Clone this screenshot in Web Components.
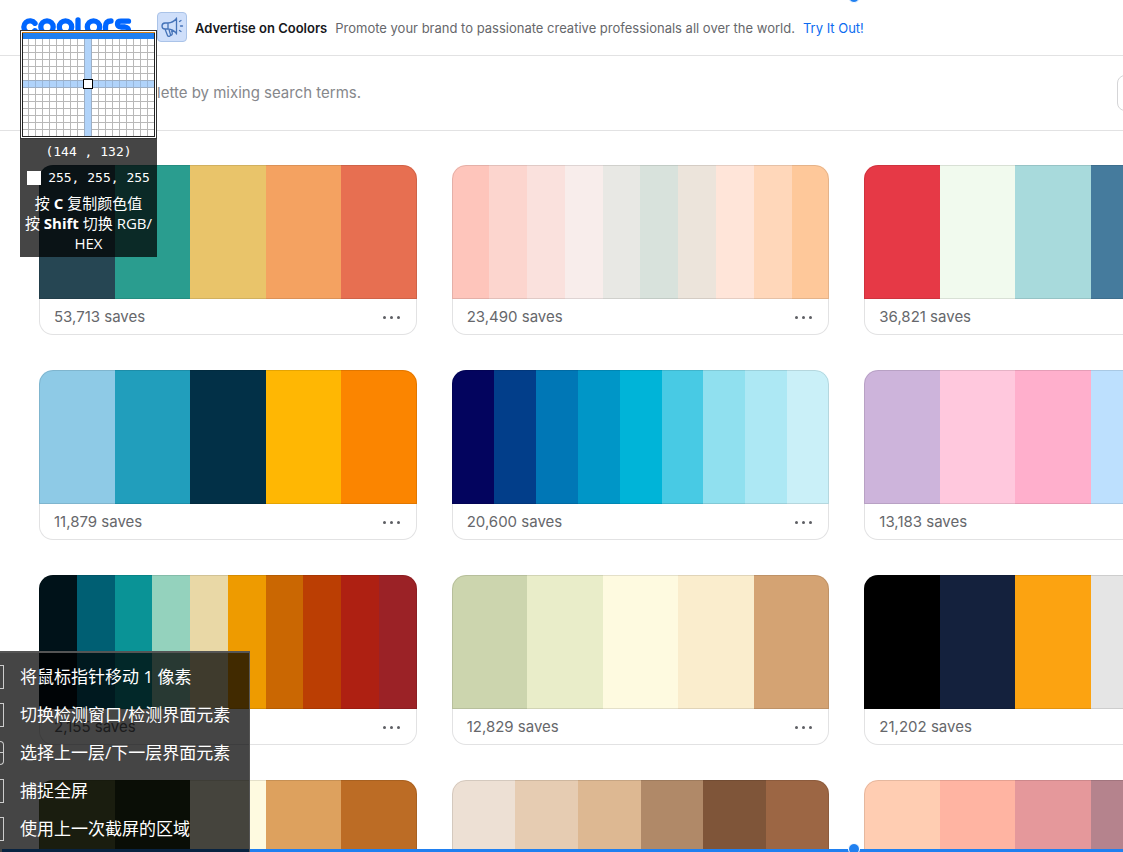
<!DOCTYPE html>
<html lang="en">
<head>
<meta charset="utf-8">
<title>Coolors</title>
<style>
html,body{margin:0;height:100%;background:#fff}
body{font-family:Inter,"Noto Sans CJK SC",sans-serif;overflow:hidden}
</style>
</head>
<body>
<palette-page></palette-page>
<script>
class BaseElement extends HTMLElement{
  constructor(){super();this.attachShadow({mode:'open'});}
  render(html){this.shadowRoot.innerHTML='<style>*{box-sizing:border-box}</style>'+html;}
}

customElements.define('brand-logo',class extends BaseElement{
  connectedCallback(){this.render(`
<style>:host{display:block}a,svg{display:block}</style>
<a href="#" aria-label="Coolors"><svg width="112" height="22" viewBox="0 0 112 22" fill="none" stroke="#0066ff" stroke-width="5.300" stroke-linecap="round">
<path d="M15 6.300A6.200 6.200 0 1 0 15 13.700"/>
<circle cx="27" cy="10" r="6.200"/><circle cx="45.500" cy="10" r="6.200"/>
<path d="M58 3v10q0 3 3 3"/><circle cx="73.500" cy="10" r="6.200"/>
<path d="M85.500 16v-6q0-6 5.500-6M108.500 4.200H101q-3.500 0-3.500 2.800 0 2.500 3.500 3h4q3.500.5 3.500 3.300t-3.500 2.800h-7"/>
</svg></a>`);}
});

customElements.define('promo-bar',class extends BaseElement{
  connectedCallback(){this.render(`
<style>
:host{display:flex;align-items:center;height:56px;padding:0 20px;border-bottom:1px solid #e2e2e3;font-size:13px;line-height:20px;color:#66676b;white-space:nowrap}
brand-logo{flex:none;width:112px}
.icon{flex:none;margin:0 8px 2px 25px;width:30px;height:30px;border:1px solid #aac3e8;border-radius:4px;background:#cfdffa}
.icon svg{display:block}
strong{font-weight:600;color:#16171b;margin-right:8px}
.try{color:#0b6bf0;text-decoration:none;margin-left:8px}
</style>
<brand-logo></brand-logo>
<span class="icon"><svg width="28" height="28" viewBox="0 0 28 28" fill="none" stroke="#4573b8" stroke-width="1.300" stroke-linecap="round" stroke-linejoin="round">
<path d="M18.500 5v16M18.500 5.500c-2.500 3-5 4.300-8.500 4.500H7c-2 .2-3 1.200-3 3s1 3 3 3h3c3.500.2 6 1.500 8.500 4.500M10 10v6M7 16l2.500 6.500c.6 1.500 3.400 1 3-.8L11 16.500M12.500 22.500c2-.2 2.300-1.500 1-5"/>
<path d="M21.500 8.500l1.500-1M22.500 13H24.500M21.500 17.500l1.500 1"/></svg></span>
<strong>Advertise on Coolors</strong><span>Promote your brand to passionate creative professionals all over the world.</span><a class="try" href="#">Try It Out!</a>`);}
});

customElements.define('search-bar',class extends BaseElement{
  connectedCallback(){this.render(`
<style>
:host{display:flex;align-items:center;justify-content:space-between;height:75px;padding-left:157px;border-bottom:1px solid #e2e2e3;overflow:hidden}
p{margin:0;font-size:15px;line-height:20px;color:#86878b;white-space:nowrap}
button{flex:none;width:36px;height:36px;margin-right:-30px;border:1px solid #d5d5d7;border-radius:8px;background:#fff}
</style>
<p>lette by mixing search terms.</p><button aria-label="Options"></button>`);}
});

customElements.define('palette-card',class extends BaseElement{
  connectedCallback(){
    const colors=this.getAttribute('colors').split(' ');
    this.render(`
<style>
:host{display:block;min-width:0}
.swatches{display:flex;height:134px;border-radius:14px 14px 0 0;overflow:hidden;position:relative}
.swatches::after{content:"";position:absolute;inset:0;border:1px solid rgba(0,0,0,.1);border-radius:14px 14px 0 0}
.swatches span{flex:1}
footer{display:flex;align-items:center;justify-content:space-between;height:36px;padding:0 14px;border:1px solid #e2e2e3;border-top:0;border-radius:0 0 14px 14px;font-size:15px;line-height:20px;color:#66676b}
button{display:flex;padding:0;border:0;background:none}
</style>
<div class="swatches">${colors.map(c=>`<span style="background:#${c}"></span>`).join('')}</div>
<footer><span><slot></slot></span><button aria-label="More"><svg width="20" height="20" viewBox="0 0 20 20" fill="#5d5e63"><circle cx="2.500" cy="10.500" r="1.500"/><circle cx="9.500" cy="10.500" r="1.500"/><circle cx="16.500" cy="10.500" r="1.500"/></svg></button></footer>`);}
});

customElements.define('palette-grid',class extends BaseElement{
  connectedCallback(){this.render(`
<style>:host{display:grid;grid-template-columns:repeat(3,minmax(0,1fr));gap:35px;padding:34px 0 35px 39px;margin-right:-119px}</style>
<palette-card colors="264653 2a9d8f e9c46a f4a261 e76f51">53,713 saves</palette-card>
<palette-card colors="fec5bb fcd5ce fae1dd f8edeb e8e8e4 d8e2dc ece4db ffe5d9 ffd7ba fec89a">23,490 saves</palette-card>
<palette-card colors="e63946 f1faee a8dadc 457b9d 1d3557">36,821 saves</palette-card>
<palette-card colors="8ecae6 219ebc 023047 ffb703 fb8500">11,879 saves</palette-card>
<palette-card colors="03045e 023e8a 0077b6 0096c7 00b4d8 48cae4 90e0ef ade8f4 caf0f8">20,600 saves</palette-card>
<palette-card colors="cdb4db ffc8dd ffafcc bde0fe a2d2ff">13,183 saves</palette-card>
<palette-card colors="001219 005f73 0a9396 94d2bd e9d8a6 ee9b00 ca6702 bb3e03 ae2012 9b2226">2,155 saves</palette-card>
<palette-card colors="ccd5ae e9edc9 fefae0 faedcd d4a373">12,829 saves</palette-card>
<palette-card colors="000000 14213d fca311 e5e5e5 ffffff">21,202 saves</palette-card>
<palette-card colors="606c38 283618 fefae0 dda15e bc6c25"></palette-card>
<palette-card colors="ede0d4 e6ccb2 ddb892 b08968 7f5539 9c6644"></palette-card>
<palette-card colors="ffcdb2 ffb4a2 e5989b b5838d 6d6875"></palette-card>`);}
});

customElements.define('colour-picker',class extends BaseElement{
  connectedCallback(){this.render(`
<style>
:host{display:block;width:137px;background:rgba(0,0,0,.73);color:#fff;font-size:15px;line-height:20px;text-align:center;font-family:"Open Sans","Noto Sans CJK SC",sans-serif}
svg{display:block}
.mono{height:26px;font-family:"DejaVu Sans Mono","Noto Sans CJK SC",monospace;font-size:13px;line-height:26px;white-space:pre}
.row{display:flex;align-items:center;justify-content:center;gap:7px}
.chip{width:14px;height:14px;background:#fff}
.help{padding:2px 0 4px}
p{margin:0;white-space:nowrap}
b{font-weight:700}
</style>
<svg width="137" height="109" viewBox="0 0 137 109" shape-rendering="crispEdges">
<defs><pattern id="cells" x="1" y="1" width="7" height="7" patternUnits="userSpaceOnUse"><path d="M0 0h1v7h-1zM0 0h7v1h-7z" fill="#b8b8b8"/></pattern></defs>
<rect width="137" height="109" fill="#333"/><rect x="1" y="1" width="135" height="107" fill="#fff"/>
<rect x="2" y="2" width="133" height="105" fill="#222"/><rect x="3" y="3" width="131" height="103" fill="#fff"/>
<rect x="3" y="3" width="131" height="103" fill="url(#cells)"/>
<rect x="3" y="3" width="131" height="6" fill="#2080f0"/><rect x="2" y="2" width="133" height="1" fill="#d98212"/>
<path d="M64 9h7v97h-7zM3 51h131v6H3z" fill="#b0d3fa"/>
<path d="M64 9h1v97h-1zM71 9h1v97h-1zM3 50h131v1H3zM3 57h131v1H3z" fill="#9dafc5"/>
<path d="M8 51v6M15 51v6M22 51v6M29 51v6M36 51v6M43 51v6M50 51v6M57 51v6M78 51v6M85 51v6M92 51v6M99 51v6M106 51v6M113 51v6M120 51v6M127 51v6" transform="translate(.500)" stroke="#99b7da"/>
<rect x="63" y="49" width="10" height="10" fill="#000"/><rect x="64" y="50" width="8" height="8" fill="#fff"/>
</svg>
<div class="mono">(144 , 132)</div>
<div class="mono row"><span class="chip"></span><span>255, 255, 255</span></div>
<div class="help"><p>按 <b>C</b> 复制颜色值</p><p>按 <b>Shift</b> 切换 RGB/<br>HEX</p></div>`);}
});

customElements.define('shortcut-panel',class extends BaseElement{
  connectedCallback(){this.render(`
<style>
:host{display:block;width:250px;padding:5px 0 4px;border-top:2px solid #555;border-right:1px solid #555;background:rgba(0,0,0,.73);background-clip:padding-box;color:#fff;font-family:"Open Sans","Noto Sans CJK SC",sans-serif;font-size:17px;line-height:38px}
ul{margin:0;padding:0;list-style:none}
li{display:flex;align-items:center;gap:16px;height:38px;white-space:nowrap}
i{width:4px;height:24px;border:1px solid #ccc;border-left:0}
i.mouse{border-radius:0 6px 6px 0;background:linear-gradient(#ccc,#ccc) 0 10px/4px 1px no-repeat}
</style>
<ul><li><i></i>将鼠标指针移动 1 像素</li><li><i></i>切换检测窗口/检测界面元素</li><li><i class="mouse"></i>选择上一层/下一层界面元素</li><li><i></i>捕捉全屏</li><li><i></i>使用上一次截屏的区域</li></ul>`);}
});

customElements.define('selection-frame',class extends BaseElement{
  connectedCallback(){this.render(`
<style>
:host{display:block;pointer-events:none}
.edge{position:absolute;left:2px;right:0;bottom:0;height:3px;background:#2080f0}
.knob{position:absolute;left:76%;width:12px;height:12px;margin-left:-5px;border:1px solid #fff;border-radius:50%;background:#2080f0}
.top{top:-9px}.bottom{bottom:-3px}
</style><div class="edge"></div><div class="knob top"></div><div class="knob bottom"></div>`);}
});

customElements.define('palette-page',class extends BaseElement{
  connectedCallback(){this.render(`
<style>
:host{display:block;position:relative;height:100vh;overflow:hidden;background:#fff}
selection-frame{position:absolute;inset:0}
colour-picker{position:absolute;left:20px;top:30px}
shortcut-panel{position:absolute;left:0;bottom:0}
</style>
<promo-bar></promo-bar><search-bar></search-bar><palette-grid></palette-grid>
<selection-frame></selection-frame><colour-picker></colour-picker><shortcut-panel></shortcut-panel>`);}
});
</script>
</body>
</html>
